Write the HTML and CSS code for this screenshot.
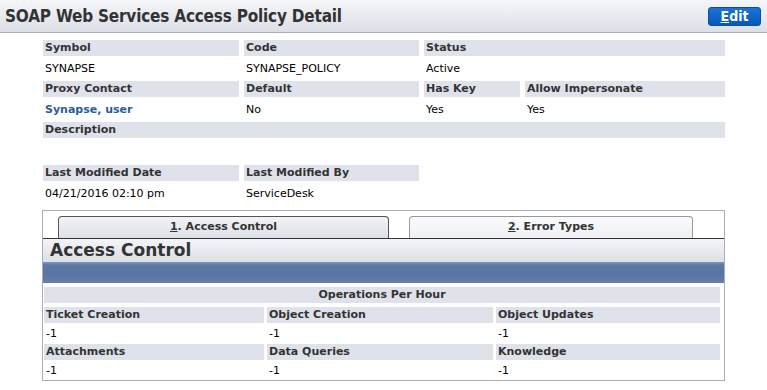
FILE: index.html
```html
<!DOCTYPE html>
<html>
<head>
    <meta charset="UTF-8">
    <link rel="stylesheet" href="styles.css">
</head>
<body>
    <div class="page-header">
        <h1>SOAP Web Services Access Policy Detail</h1>
        <button class="edit-btn"><u>E</u>dit</button>
    </div>

    <div class="details">
        <div class="field-grid">
            <div class="label">Symbol</div>
            <div class="label">Code</div>
            <div class="label span-2">Status</div>
            <div class="value">SYNAPSE</div>
            <div class="value">SYNAPSE_POLICY</div>
            <div class="value span-2">Active</div>

            <div class="label">Proxy Contact</div>
            <div class="label">Default</div>
            <div class="label">Has Key</div>
            <div class="label">Allow Impersonate</div>
            <div class="value"><a class="link">Synapse, user</a></div>
            <div class="value">No</div>
            <div class="value">Yes</div>
            <div class="value">Yes</div>

            <div class="label span-4">Description</div>
            <div class="value span-4 desc"></div>

            <div class="label">Last Modified Date</div>
            <div class="label">Last Modified By</div>
            <div class="blank span-2"></div>
            <div class="value">04/21/2016 02:10 pm</div>
            <div class="value">ServiceDesk</div>
            <div class="blank span-2"></div>
        </div>
    </div>

    <div class="tab-box">
        <div class="tab-strip">
            <div class="tab tab-active"><u>1</u>. Access Control</div>
            <div class="tab tab-other"><u>2</u>. Error Types</div>
        </div>
        <div class="section-title">Access Control</div>
        <div class="blue-band"></div>
        <div class="ops-grid">
            <div class="label span-3 center">Operations Per Hour</div>
            <div class="label">Ticket Creation</div>
            <div class="label">Object Creation</div>
            <div class="label">Object Updates</div>
            <div class="value short">-1</div>
            <div class="value short">-1</div>
            <div class="value short">-1</div>
            <div class="label">Attachments</div>
            <div class="label">Data Queries</div>
            <div class="label">Knowledge</div>
            <div class="value short">-1</div>
            <div class="value short">-1</div>
            <div class="value short">-1</div>
        </div>
    </div>
</body>
</html>
```

FILE: styles.css
```css
body {
    margin: 0;
    font-family: "DejaVu Sans", Verdana, sans-serif;
    font-size: 11px;
    color: #000;
    background: #fff;
}

.page-header {
    height: 33px;
    box-sizing: border-box;
    display: flex;
    justify-content: space-between;
    align-items: center;
    padding: 0 6px 0 5px;
    background: linear-gradient(#f5f6f9, #dcdfe6);
    border-bottom: 1px solid #a9adb9;
}

.page-header h1 {
    margin: 0;
    font-family: "Liberation Sans Narrow", "DejaVu Sans Condensed", sans-serif;
    font-size: 17px;
    font-weight: bold;
    letter-spacing: -0.2px;
    color: #333;
}

.edit-btn {
    width: 53px;
    height: 19px;
    margin-top: 1px;
    padding: 0;
    font-family: "Liberation Sans Narrow", "DejaVu Sans Condensed", sans-serif;
    font-size: 14px;
    font-weight: bold;
    color: #fff;
    background: linear-gradient(#1a74d6, #0757b8);
    border: 1px solid #0a4fa6;
    border-radius: 3px;
    line-height: 17px;
}

.details {
    padding: 7px 0 0 43px;
}

.field-grid {
    display: grid;
    grid-template-columns: 196px 175px 96px 200px;
    column-gap: 5px;
    row-gap: 5px;
}

.label {
    height: 16px;
    line-height: 16px;
    padding-left: 2px;
    background: #dfe2ea;
    font-weight: bold;
    color: #333;
    white-space: nowrap;
}

.value {
    height: 15px;
    line-height: 15px;
    padding-left: 2px;
    white-space: nowrap;
}

.value.desc {
    height: 17px;
}

.value.short {
    height: 13px;
    line-height: 13px;
}

.span-2 { grid-column: span 2; }
.span-3 { grid-column: span 3; }
.span-4 { grid-column: span 4; }
.center { text-align: center; padding-left: 0; }

.link {
    color: #2b5c9b;
    font-weight: bold;
}

.tab-box {
    width: 683px;
    box-sizing: border-box;
    margin: 9px 0 0 42px;
    border: 1px solid #a9adb9;
}

.tab-strip {
    display: flex;
    gap: 20px;
    padding: 5px 0 0 15px;
    border-bottom: 1px solid #333;
}

.tab {
    height: 22px;
    box-sizing: border-box;
    line-height: 20px;
    text-align: center;
    font-weight: bold;
    color: #333;
    border: 1px solid #999;
    border-bottom: none;
    border-radius: 4px 4px 0 0;
}

.tab-active {
    width: 331px;
    border-color: #555;
    background: linear-gradient(#f2f3f6, #dde0e7);
}

.tab-other {
    width: 284px;
    background: linear-gradient(#fafbfc, #eef0f4);
}

.section-title {
    height: 23px;
    line-height: 23px;
    padding-left: 7px;
    font-size: 17px;
    font-weight: bold;
    color: #333;
    background: linear-gradient(#f4f5f8, #dcdfe6);
}

.blue-band {
    height: 21px;
    background: linear-gradient(#8296bb, #5c78a6 3px, #5874a3 60%, #6680ac);
}

.ops-grid {
    display: grid;
    grid-template-columns: 220px 226px 224px;
    column-gap: 3px;
    row-gap: 4px;
    padding: 4px 1px 3px 1px;
}
```
